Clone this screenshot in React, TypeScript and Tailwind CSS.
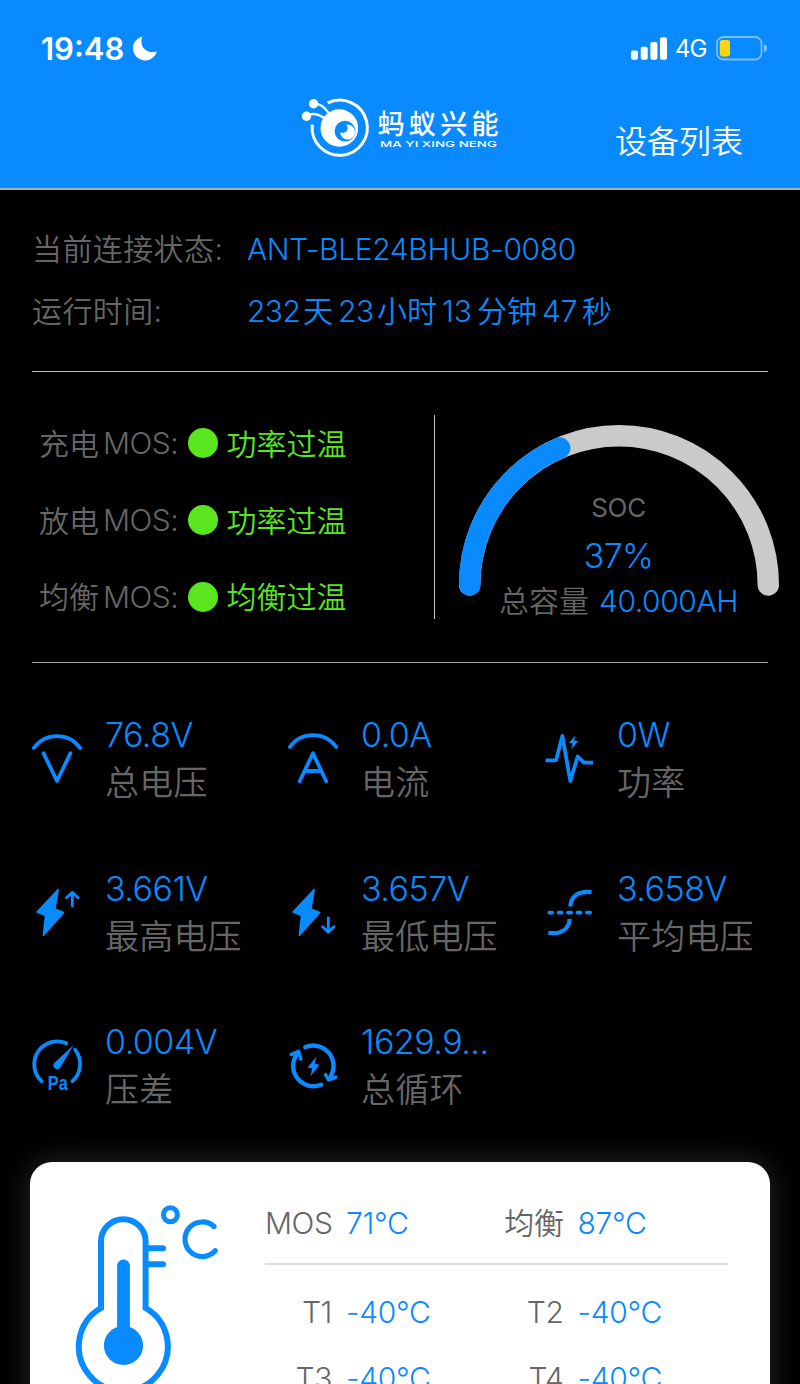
import type { ReactNode } from 'react'

const BLUE = '#0a8aff'

const mosRows = [
	{ label: '充电', state: '功率过温' },
	{ label: '放电', state: '功率过温' },
	{ label: '均衡', state: '均衡过温' },
]

const Icon = ({ children }: { children: ReactNode }) => (
	<svg viewBox='0 0 50 50' className='w-[50px] h-[50px] shrink-0 overflow-visible' fill='none' stroke={BLUE} strokeWidth='3.8' strokeLinecap='round' strokeLinejoin='round'>
		{children}
	</svg>
)

const VoltIcon = () => (
	<Icon>
		<path d='M1.8 14A28.5 28.5 0 0 1 48.2 14' />
		<path d='M11.5 19.2L25 47L38.5 19.2' />
	</Icon>
)

const AmpIcon = () => (
	<Icon>
		<path d='M1.8 13A28.5 28.5 0 0 1 48.2 13' />
		<path d='M11.7 47.3L25 19.2L38.2 47.3M16.5 37H33.5' />
	</Icon>
)

const PowerIcon = () => (
	<Icon>
		<path strokeLinecap='butt' d='M1.5 26.3H12L18.4 2L26.3 47L33.7 22.5L40 28.7H49' />
		<path d='M31.2 1.4L24.8 9L28.8 9.6L27 15.6L34.2 7.2L30.2 6.6Z' fill={BLUE} stroke='none' />
	</Icon>
)

const bolt = 'M26.2 1.5L5 24L13.5 27.4L11.5 47.3L31.5 24.6L22.8 21Z'

const HighIcon = () => (
	<Icon>
		<path d={bolt} fill={BLUE} strokeWidth='1.6' />
		<path d='M40.3 18V4.6M34.6 9.8L40.3 4.4L46 9.8' strokeWidth='2.9' />
	</Icon>
)

const LowIcon = () => (
	<Icon>
		<path d={bolt} fill={BLUE} strokeWidth='1.6' />
		<path d='M40.3 30V43.6M34.6 38.7L40.3 44.1L46 38.7' strokeWidth='2.9' />
	</Icon>
)

const AvgIcon = () => (
	<Icon>
		<path strokeLinecap='butt' strokeWidth='4.2' d='M26.3 18.5C26.6 9 34 2.6 47.5 4.2M25.6 31C25.4 40 18 47 4.3 44.8' />
		<path d='M5.3 24.6H8.3M14.5 24.6H17.8M24 24.6H27.2M33.4 24.6H36.6M42.9 24.6H46.2' />
	</Icon>
)

const PaIcon = () => (
	<Icon>
		<path d='M9.6 40.2A23 23 0 0 1 34.3 2.2M43.2 8.8A23 23 0 0 1 40.4 40.2' />
		<path d='M41.6 4L22.2 22.1A3.8 3.8 0 0 0 28.4 26.6Z' fill={BLUE} stroke='none' />
		<text x='15.8' y='48.6' fontSize='19.5' fontWeight='700' textLength='20' lengthAdjust='spacingAndGlyphs' fill={BLUE} stroke='none' fontFamily='Liberation Sans, sans-serif'>Pa</text>
	</Icon>
)

const CycleIcon = () => (
	<Icon>
		<path strokeWidth='4.4' d='M17.2 6.2A20.3 20.3 0 0 1 42.8 35M33.2 43.7A20.3 20.3 0 0 1 8.7 13.5' />
		<path strokeWidth='3.6' d='M3.2 13.6L10.6 10.4L12.8 18M37.6 33.6L40.7 38.8L47.6 36.2' />
		<path d='M28.4 15.6L19.6 26.4L24.2 27.6L22.4 35.2L31.4 23.8L26.6 22.6Z' fill={BLUE} stroke='none' />
	</Icon>
)

const metrics = [
	{ icon: <VoltIcon />, value: '76.8V', label: '总电压' },
	{ icon: <AmpIcon />, value: '0.0A', label: '电流' },
	{ icon: <PowerIcon />, value: '0W', label: '功率' },
	{ icon: <HighIcon />, value: '3.661V', label: '最高电压' },
	{ icon: <LowIcon />, value: '3.657V', label: '最低电压' },
	{ icon: <AvgIcon />, value: '3.658V', label: '平均电压' },
	{ icon: <PaIcon />, value: '0.004V', label: '压差' },
	{ icon: <CycleIcon />, value: '1629.9...', label: '总循环' },
]

const StatusBar = () => (
	<div className='flex items-center h-[96px] pl-[41px] pr-[33px] text-white'>
		<span className='w-[92px] text-[31px] leading-none font-[580]'>19:48</span>
		<svg viewBox='0 0 24 25' className='w-6 h-[25px]' fill='#fff'>
			<path d='M9.4.4A12.2 12.2 0 1 0 23.9 15.4C13.5 18.5 5.5 10.5 9.4.4Z' />
		</svg>
		<svg viewBox='0 0 36 23' className='w-9 h-[23px] ml-auto mr-[8px]' fill='#fff'>
			<rect x='0' y='13.5' width='7' height='9.3' rx='2' />
			<rect x='9.7' y='9.7' width='7' height='13.1' rx='2' />
			<rect x='19.4' y='5' width='7' height='17.8' rx='2' />
			<rect x='29' y='0.2' width='7' height='22.6' rx='2' />
		</svg>
		<span className='w-[41px] pt-[2px] text-[24px] leading-none font-normal tracking-[-0.9px]'>4G</span>
		<svg viewBox='0 0 51 25' className='w-[51px] h-[25px]'>
			<rect x='1' y='1' width='44.5' height='22.5' rx='6.5' fill='none' stroke='#fff' strokeOpacity='0.45' strokeWidth='1.8' />
			<rect x='3.8' y='4' width='10.2' height='16.4' rx='2.8' fill='#fcd60a' />
			<path d='M48 8.3Q51 9.5 51 12.2T48 16.2Z' fill='#fff' fillOpacity='0.5' />
		</svg>
	</div>
)

const Logo = () => (
	<svg viewBox='300 95 200 65' className='w-[200px] h-[65px]'>
		<g fill='none' stroke='#fff'>
			<path d='M327.6 102.9A27.6 27.6 0 1 1 312.3 124.5' strokeWidth='3' />
			<path d='M314 103.6Q322.5 103.5 329 113.5M307 115.5Q315 111.5 325 118.5' strokeWidth='2.4' />
		</g>
		<g fill='#fff'>
			<circle cx='313.6' cy='103.8' r='4.7' />
			<circle cx='306.5' cy='116.2' r='4.7' />
			<circle cx='339.3' cy='128' r='18.8' />
		</g>
		<circle cx='345' cy='131.2' r='10.4' fill={BLUE} />
		<circle cx='347.6' cy='132' r='7.4' fill='#fff' />
		<circle cx='342.8' cy='128.2' r='4.8' fill={BLUE} />
		<text x='377.5' y='133.8' fontSize='27' fontWeight='500' textLength='121' fill='#fff' fontFamily='Noto Sans CJK SC, sans-serif'>蚂蚁兴能</text>
		<text x='380' y='147.2' fontSize='8' fontWeight='500' textLength='117' lengthAdjust='spacingAndGlyphs' fill='#fff' fontFamily='Inter, sans-serif'>MA YI XING NENG</text>
	</svg>
)

const Gauge = ({ percent }: { percent: number }) => {
	const angle = Math.PI * (1 - percent / 100)
	const x = 160 + 149.3 * Math.cos(angle)
	const y = 160 - 149.3 * Math.sin(angle)
	return (
		<svg viewBox='0 0 320 172' className='w-[320px] h-[172px]' fill='none' strokeWidth='21.4' strokeLinecap='round'>
			<path d='M10.7 160A149.3 149.3 0 0 1 309.3 160' stroke='#c9cbca' />
			<path d={`M10.7 160A149.3 149.3 0 0 1 ${x} ${y}`} stroke={BLUE} />
		</svg>
	)
}

const Thermometer = () => (
	<svg viewBox='70 1200 155 200' className='w-[155px] h-[200px]' fill='none' stroke={BLUE} strokeWidth='6' strokeLinecap='round'>
		<path d='M101 1308V1241.5A22.3 22.3 0 0 1 145.6 1241.5V1308A44.5 44.5 0 1 1 101 1308Z' />
		<path d='M123.5 1266V1340' strokeWidth='12.8' />
		<circle cx='123.5' cy='1345.5' r='19.6' fill={BLUE} stroke='none' />
		<path d='M147 1248.3H163M147 1264.3H163' />
		<circle cx='170.4' cy='1214.8' r='7' strokeWidth='5' />
		<path d='M214 1226.5A17.3 17.3 0 1 0 215.2 1250.8' strokeWidth='5.2' />
	</svg>
)

const Temp = ({ label, value }: { label: string, value: string }) => (
	<div className='flex items-center'>
		<span className='w-[67px] mr-[14px] text-right text-[#666] tracking-[-0.4px]'>{label}</span>
		<span className='text-[#0a8aff] tracking-[-0.3px]'>{value}</span>
	</div>
)

const App = () => {
	return (
		<div className="w-[800px] h-[1384px] overflow-hidden bg-black text-[30px] leading-none whitespace-nowrap text-[#666] font-[360] font-['Inter','Noto_Sans_CJK_SC',sans-serif]">
			<header className='h-[190px] bg-[#0a8aff] border-b-2 border-[#9bb5bd]'>
				<StatusBar />
				<div className='flex items-start pl-[300px] pr-[57px] -mt-px'>
					<Logo />
					<span className='ml-auto mt-[31px] text-[32px] leading-none text-white'>设备列表</span>
				</div>
			</header>

			<main className='px-8'>
				<section className='h-[182px] pt-[28px] border-b border-[#c0c0c0]'>
					<div className='flex items-center h-[62px]'>
						<span className='w-[215px] tracking-[0.4px]'>当前连接状态:</span>
						<span className='text-[#0a8aff] tracking-[-0.35px]'>ANT-BLE24BHUB-0080</span>
					</div>
					<div className='flex items-center h-[62px]'>
						<span className='w-[215px] tracking-[0.4px]'>运行时间:</span>
						<div className='flex text-[#0a8aff]'>
							<span className='w-[56px] tracking-[-0.6px]'>232</span>
							<span className='w-[35px]'>天</span>
							<span className='w-[39px] tracking-[-0.5px]'>23</span>
							<span className='w-[65px]'>小时</span>
							<span className='w-[35px]'>13</span>
							<span className='w-[65px]'>分钟</span>
							<span className='w-[40px]'>47</span>
							<span>秒</span>
						</div>
					</div>
				</section>

				<section className='flex h-[291px] pt-[33px] border-b border-[#a0a0a0]'>
					<div className='w-[402px] pl-[7px]'>
						{mosRows.map((row) => (
							<div key={row.label} className='flex items-center h-[76.7px]'>
								<span className='w-[64px] pt-px'>{row.label}</span>
								<span className='w-[84.5px] tracking-[-0.5px]'>MOS:</span>
								<span className='w-[30px] h-[30px] mr-[9px] rounded-full bg-[#5ae61e]' />
								<span className='pt-px text-[#5ae61e]'>{row.state}</span>
							</div>
						))}
					</div>
					<div className='w-px h-[204px] mt-[10px] bg-[#c8c8c8]' />
					<div className='relative -mr-3 ml-[23.5px] mt-[20px]'>
						<Gauge percent={37} />
						<div className='absolute inset-x-0 top-[69px] flex flex-col items-center'>
							<span className='h-[28px] text-[26px] leading-[28px] font-normal tracking-[-0.3px]'>SOC</span>
							<span className='h-[34px] mt-[17px] text-[34px] leading-[34px] text-[#0a8aff] tracking-[-0.6px]'>37%</span>
							<div className='flex mt-[13px] gap-[10px]'>
								<span>总容量</span>
								<span className='text-[#0a8aff] tracking-[-0.4px]'>40.000AH</span>
							</div>
						</div>
					</div>
				</section>

				<section className='grid grid-cols-[256px_256px_224px] auto-rows-[153.6px] pt-[46px]'>
					{metrics.map((item) => (
						<div key={item.label} className='flex pt-[25px] gap-[23px]'>
							{item.icon}
							<div className='flex flex-col text-[34px] -mt-[24px]'>
								<span className='h-[49px] leading-[49px] text-[#0a8aff] tracking-[-0.5px]'>{item.value}</span>
								<span className='h-[48px] leading-[48px] tracking-[0.2px]'>{item.label}</span>
							</div>
						</div>
					))}
				</section>
			</main>

			<section className='flex h-[400px] mx-[30px] -mt-[8px] pt-[38px] pl-[40px] rounded-[22px] bg-white shadow-[0_0_30px_rgba(255,255,255,0.17)]'>
				<Thermometer />
				<div className='w-[463px] ml-[40px]'>
					<div className='grid grid-cols-2 items-center h-[65px] pb-[17px] border-b-2 border-[#dcdcdc]'>
						<Temp label='MOS' value='71°C' />
						<Temp label='均衡' value='87°C' />
					</div>
					<div className='grid grid-cols-2 auto-rows-[66px] items-center pt-[14px]'>
						<Temp label='T1' value='-40°C' />
						<Temp label='T2' value='-40°C' />
						<Temp label='T3' value='-40°C' />
						<Temp label='T4' value='-40°C' />
					</div>
				</div>
			</section>
		</div>
	)
}

export default App
